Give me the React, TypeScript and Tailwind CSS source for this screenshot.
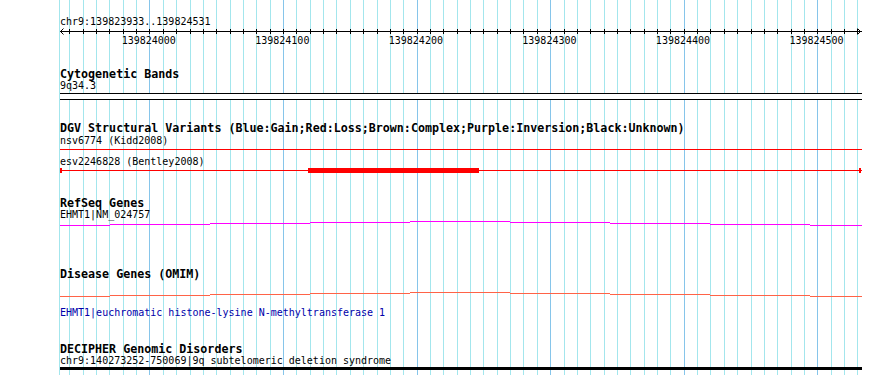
const START = 139823933;
const bpToX = (bp: number) => Math.round(60 + (bp - START) * 1.3356);

const gridBps: number[] = [];
for (let b = 139823940; b <= 139824530; b += 10) gridBps.push(b);

const majorLabels = [139824000, 139824100, 139824200, 139824300, 139824400, 139824500];

const stepX = [60, 110, 210, 310, 410, 510, 610, 710, 810, 862];

function Grid() {
  return (
    <svg className="absolute inset-0" width={890} height={375} shapeRendering="crispEdges">
      <rect x={59} y={0} width={1} height={375} fill="#a3e6ed" />
      {gridBps.map((b) => (
        <rect key={b} x={bpToX(b)} y={0} width={1} height={375} fill={b % 100 === 0 ? '#86c5ea' : '#a3e6ed'} />
      ))}
    </svg>
  );
}

function Steps({ ys, color, height }: { ys: number[]; color: string; height: number }) {
  return (
    <svg width={890} height={height} shapeRendering="crispEdges">
      {ys.map((y, i) => (
        <rect key={i} x={stepX[i]} y={y} width={stepX[i + 1] - stepX[i]} height={1} fill={color} />
      ))}
    </svg>
  );
}

function Title({ children, lh = 'leading-[12px]' }: { children: string; lh?: string }) {
  return <div className={`pl-[60px] text-[11.667px] font-bold whitespace-pre text-black ${lh}`}>{children}</div>;
}

function Label({ children, color = 'text-black' }: { children: string; color?: string }) {
  return <div className={`pl-[60px] text-[10px] leading-[12px] whitespace-pre ${color}`}>{children}</div>;
}

export default function App() {
  return (
    <div className="relative w-[890px] h-[375px] overflow-hidden bg-white font-['DejaVu_Sans_Mono',monospace]">
      <Grid />
      <div className="relative pt-[16px]">
        {/* Ruler */}
        <Label>chr9:139823933..139824531</Label>
        <svg width={890} height={7} shapeRendering="crispEdges">
          <rect x={60} y={3} width={802} height={1} fill="#000" />
          {gridBps.map((b) => (
            <rect key={b} x={bpToX(b)} y={1} width={1} height={5} fill="#000" />
          ))}
          <polyline points="63.5,0.5 60.5,3.5 63.5,6.5" fill="none" stroke="#000" strokeWidth={1} shapeRendering="auto" />
          <polyline points="857.5,0.5 860.5,3.5 857.5,6.5" fill="none" stroke="#000" strokeWidth={1} shapeRendering="auto" />
        </svg>
        <div className="flex pl-[82px] h-[11px] text-[10px] leading-[11px] text-black">
          {majorLabels.map((b) => (
            <div key={b} className="w-[133.56px] shrink-0 text-center">
              {b}
            </div>
          ))}
        </div>

        {/* Cytogenetic bands */}
        <div className="mt-[22px]">
          <Title>Cytogenetic Bands</Title>
          <Label>9q34.3</Label>
        </div>
        <svg className="mt-[1px]" width={890} height={7} shapeRendering="crispEdges">
          <rect x={60} y={0} width={802} height={7} fill="#fff" />
          <rect x={60} y={0} width={802} height={1} fill="#000" />
          <rect x={60} y={6} width={802} height={1} fill="#000" />
        </svg>

        {/* DGV */}
        <div className="mt-[22px]">
          <Title lh="leading-[13px]">
            DGV Structural Variants (Blue:Gain;Red:Loss;Brown:Complex;Purple:Inversion;Black:Unknown)
          </Title>
          <Label>nsv6774 (Kidd2008)</Label>
        </div>
        <svg width={890} height={4} shapeRendering="crispEdges">
          <rect x={60} y={2} width={802} height={1} fill="#ff0000" />
        </svg>
        <div className="mt-[5px]">
          <Label>esv2246828 (Bentley2008)</Label>
        </div>
        <svg width={890} height={6} shapeRendering="crispEdges">
          <rect x={60} y={2} width={802} height={1} fill="#ff0000" />
          <rect x={308} y={0} width={171} height={5} fill="#ff0000" />
          <rect x={60} y={0} width={2} height={5} fill="#ff0000" />
          <rect x={859} y={0} width={2} height={5} fill="#ff0000" />
        </svg>

        {/* RefSeq */}
        <div className="mt-[23px]">
          <Title>RefSeq Genes</Title>
          <Label>EHMT1|NM_024757</Label>
        </div>
        <Steps ys={[4, 3, 2, 1, 0, 1, 2, 3, 4]} color="#ff00ff" height={6} />

        {/* OMIM */}
        <div className="mt-[41px]">
          <Title lh="leading-[13px]">Disease Genes (OMIM)</Title>
        </div>
        <div className="mt-[9px]">
          <Steps ys={[6, 5, 4, 3, 2, 3, 4, 5, 6]} color="#ff6347" height={7} />
        </div>
        <div className="mt-[10px]">
          <Label color="text-[#0000aa]">EHMT1|euchromatic histone-lysine N-methyltransferase 1</Label>
        </div>

        {/* DECIPHER */}
        <div className="mt-[24px]">
          <Title>DECIPHER Genomic Disorders</Title>
          <Label>chr9:140273252-750069|9q subtelomeric deletion syndrome</Label>
        </div>
        <svg width={890} height={3} shapeRendering="crispEdges">
          <rect x={60} y={0} width={802} height={3} fill="#000" />
        </svg>
      </div>
    </div>
  );
}
